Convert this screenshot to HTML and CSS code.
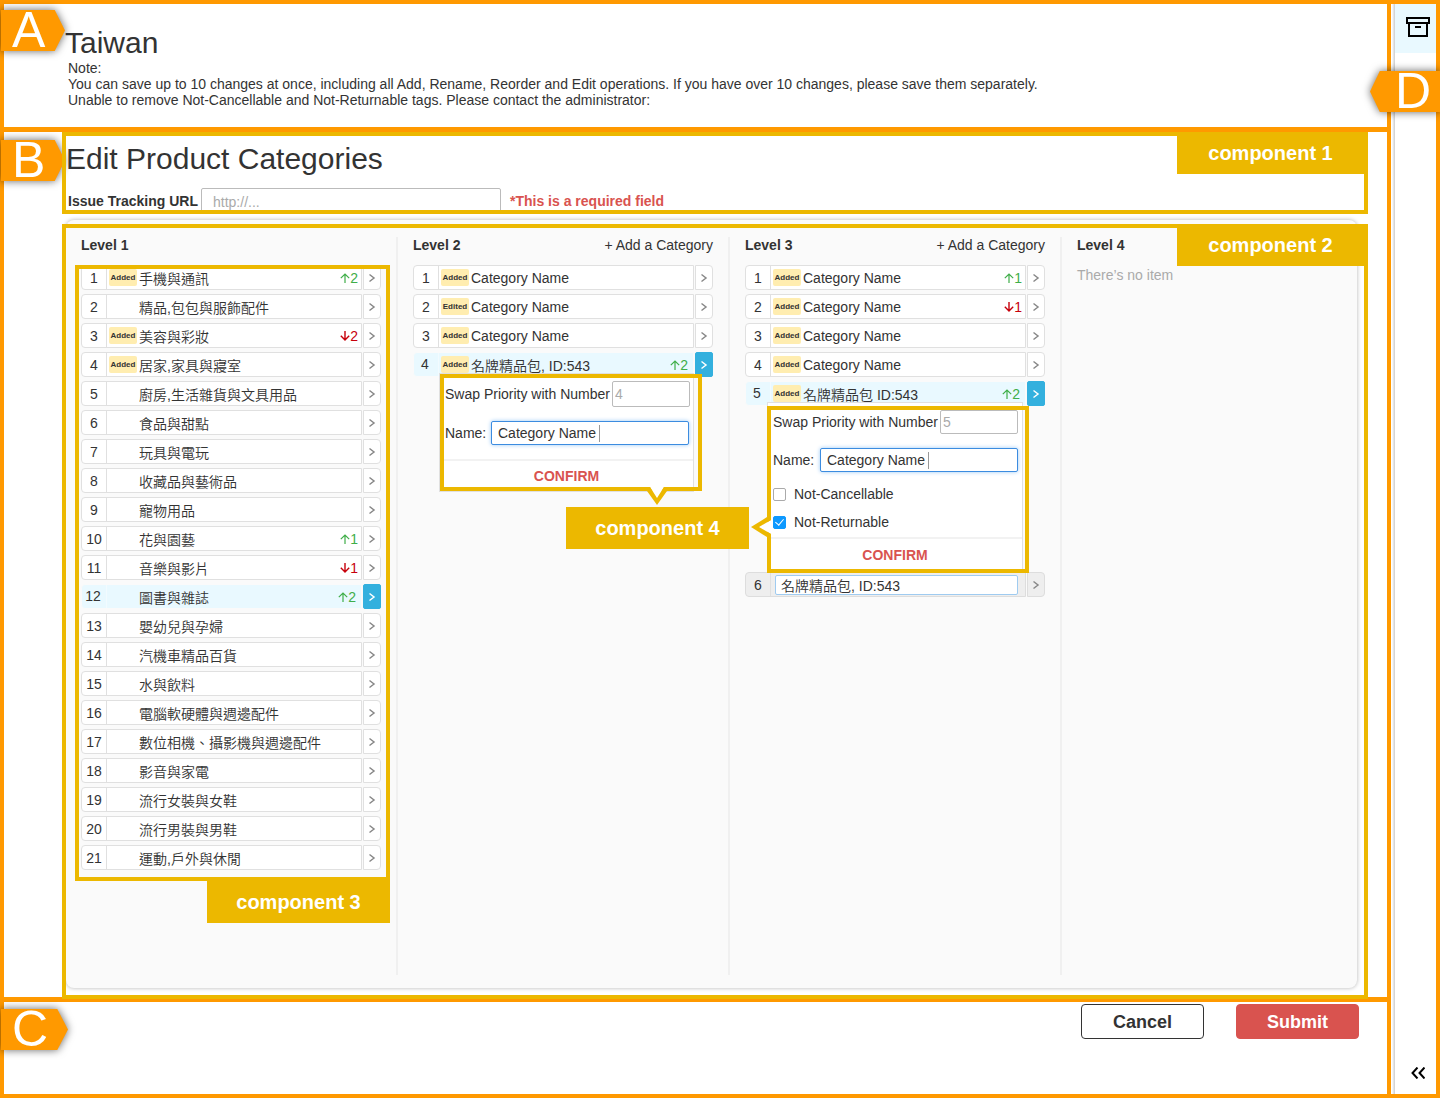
FILE: index.html
```html
<!DOCTYPE html>
<html lang="en">
<head>
<meta charset="utf-8">
<meta name="viewport" content="width=device-width, initial-scale=1">
<title>Edit Product Categories</title>
<link rel="stylesheet" href="styles.css">
</head>
<body>
<svg class="defs" aria-hidden="true">
  <symbol id="i-next" viewBox="0 0 8 10"><path d="M1.5 1.5 6 5 1.5 8.5" fill="none" stroke="currentColor" stroke-width="1.5"/></symbol>
  <symbol id="i-up" viewBox="0 0 10 10"><path d="M5 10V1.2M.8 5.2 5 1l4.200 4.200" fill="none" stroke="currentColor" stroke-width="1.200"/></symbol>
  <symbol id="i-down" viewBox="0 0 10 10"><path d="M5 0v8.800M.8 4.800 5 9l4.200-4.200" fill="none" stroke="currentColor" stroke-width="1.400"/></symbol>
</svg>
<div class="app">
  <main class="main">
    <header class="region region-a">
      <span class="letter letter-a"><b>A</b></span>
      <h1 class="title">Taiwan</h1>
      <p class="note">Note:<br>You can save up to 10 changes at once, including all Add, Rename, Reorder and Edit operations. If you have over 10 changes, please save them separately.<br>Unable to remove Not-Cancellable and Not-Returnable tags. Please contact the administrator:</p>
    </header>

    <section class="region region-b">
      <span class="letter letter-b"><b>B</b></span>
      <div class="intro">
        <h2 class="title">Edit Product Categories</h2>
        <div class="url-row">
          <label for="url">Issue Tracking URL</label>
          <input id="url" class="url" type="text" placeholder="http://...">
          <span class="error">*This is a required field</span>
        </div>
        <div class="frame frame-1"><span class="tag tag-corner">component 1</span></div>
      </div>

      <div class="board">
        <div class="card">
          <section class="level">
            <div class="level-head"><h3>Level 1</h3></div>
            <ol class="list">
              <li><div class="row"><div class="cell"><span class="num">1</span><span class="slot"><em>Added</em></span><span class="name zh">手機與通訊</span><span class="move up"><svg><use href="#i-up"/></svg>2</span></div><button class="open" aria-label="Open"><svg><use href="#i-next"/></svg></button></div></li>
              <li><div class="row"><div class="cell"><span class="num">2</span><span class="slot"></span><span class="name zh">精品,包包與服飾配件</span></div><button class="open" aria-label="Open"><svg><use href="#i-next"/></svg></button></div></li>
              <li><div class="row"><div class="cell"><span class="num">3</span><span class="slot"><em>Added</em></span><span class="name zh">美容與彩妝</span><span class="move down"><svg><use href="#i-down"/></svg>2</span></div><button class="open" aria-label="Open"><svg><use href="#i-next"/></svg></button></div></li>
              <li><div class="row"><div class="cell"><span class="num">4</span><span class="slot"><em>Added</em></span><span class="name zh">居家,家具與寢室</span></div><button class="open" aria-label="Open"><svg><use href="#i-next"/></svg></button></div></li>
              <li><div class="row"><div class="cell"><span class="num">5</span><span class="slot"></span><span class="name zh">廚房,生活雜貨與文具用品</span></div><button class="open" aria-label="Open"><svg><use href="#i-next"/></svg></button></div></li>
              <li><div class="row"><div class="cell"><span class="num">6</span><span class="slot"></span><span class="name zh">食品與甜點</span></div><button class="open" aria-label="Open"><svg><use href="#i-next"/></svg></button></div></li>
              <li><div class="row"><div class="cell"><span class="num">7</span><span class="slot"></span><span class="name zh">玩具與電玩</span></div><button class="open" aria-label="Open"><svg><use href="#i-next"/></svg></button></div></li>
              <li><div class="row"><div class="cell"><span class="num">8</span><span class="slot"></span><span class="name zh">收藏品與藝術品</span></div><button class="open" aria-label="Open"><svg><use href="#i-next"/></svg></button></div></li>
              <li><div class="row"><div class="cell"><span class="num">9</span><span class="slot"></span><span class="name zh">寵物用品</span></div><button class="open" aria-label="Open"><svg><use href="#i-next"/></svg></button></div></li>
              <li><div class="row"><div class="cell"><span class="num">10</span><span class="slot"></span><span class="name zh">花與園藝</span><span class="move up"><svg><use href="#i-up"/></svg>1</span></div><button class="open" aria-label="Open"><svg><use href="#i-next"/></svg></button></div></li>
              <li><div class="row"><div class="cell"><span class="num">11</span><span class="slot"></span><span class="name zh">音樂與影片</span><span class="move down"><svg><use href="#i-down"/></svg>1</span></div><button class="open" aria-label="Open"><svg><use href="#i-next"/></svg></button></div></li>
              <li><div class="row selected"><div class="cell"><span class="num">12</span><span class="slot"></span><span class="name zh">圖書與雜誌</span><span class="move up"><svg><use href="#i-up"/></svg>2</span></div><button class="open" aria-label="Open"><svg><use href="#i-next"/></svg></button></div></li>
              <li><div class="row"><div class="cell"><span class="num">13</span><span class="slot"></span><span class="name zh">嬰幼兒與孕婦</span></div><button class="open" aria-label="Open"><svg><use href="#i-next"/></svg></button></div></li>
              <li><div class="row"><div class="cell"><span class="num">14</span><span class="slot"></span><span class="name zh">汽機車精品百貨</span></div><button class="open" aria-label="Open"><svg><use href="#i-next"/></svg></button></div></li>
              <li><div class="row"><div class="cell"><span class="num">15</span><span class="slot"></span><span class="name zh">水與飲料</span></div><button class="open" aria-label="Open"><svg><use href="#i-next"/></svg></button></div></li>
              <li><div class="row"><div class="cell"><span class="num">16</span><span class="slot"></span><span class="name zh">電腦軟硬體與週邊配件</span></div><button class="open" aria-label="Open"><svg><use href="#i-next"/></svg></button></div></li>
              <li><div class="row"><div class="cell"><span class="num">17</span><span class="slot"></span><span class="name zh">數位相機、攝影機與週邊配件</span></div><button class="open" aria-label="Open"><svg><use href="#i-next"/></svg></button></div></li>
              <li><div class="row"><div class="cell"><span class="num">18</span><span class="slot"></span><span class="name zh">影音與家電</span></div><button class="open" aria-label="Open"><svg><use href="#i-next"/></svg></button></div></li>
              <li><div class="row"><div class="cell"><span class="num">19</span><span class="slot"></span><span class="name zh">流行女裝與女鞋</span></div><button class="open" aria-label="Open"><svg><use href="#i-next"/></svg></button></div></li>
              <li><div class="row"><div class="cell"><span class="num">20</span><span class="slot"></span><span class="name zh">流行男裝與男鞋</span></div><button class="open" aria-label="Open"><svg><use href="#i-next"/></svg></button></div></li>
              <li><div class="row"><div class="cell"><span class="num">21</span><span class="slot"></span><span class="name zh">運動,戶外與休閒</span></div><button class="open" aria-label="Open"><svg><use href="#i-next"/></svg></button></div></li>
              <li class="frame frame-3" role="presentation"><span class="tag tag-below">component 3</span></li>
            </ol>
          </section>

          <section class="level">
            <div class="level-head"><h3>Level 2</h3><button class="add">+ Add a Category</button></div>
            <ol class="list">
              <li><div class="row"><div class="cell"><span class="num">1</span><span class="slot"><em>Added</em></span><span class="name">Category Name</span></div><button class="open" aria-label="Open"><svg><use href="#i-next"/></svg></button></div></li>
              <li><div class="row"><div class="cell"><span class="num">2</span><span class="slot"><em>Edited</em></span><span class="name">Category Name</span></div><button class="open" aria-label="Open"><svg><use href="#i-next"/></svg></button></div></li>
              <li><div class="row"><div class="cell"><span class="num">3</span><span class="slot"><em>Added</em></span><span class="name">Category Name</span></div><button class="open" aria-label="Open"><svg><use href="#i-next"/></svg></button></div></li>
              <li><div class="row selected"><div class="cell"><span class="num">4</span><span class="slot"><em>Added</em></span><span class="name zh">名牌精品包, ID:543</span><span class="move up"><svg><use href="#i-up"/></svg>2</span></div><button class="open" aria-label="Open"><svg><use href="#i-next"/></svg></button></div>
                <form class="pop pop-menu">
                  <div class="field"><label for="swap-4">Swap Priority with Number</label><input id="swap-4" class="swap" type="text" placeholder="4"></div>
                  <div class="field"><label for="name-4">Name:</label><span class="focus"><input id="name-4" type="text" value="Category Name"><i class="caret"></i></span></div>
                  <button class="confirm" type="button">CONFIRM</button>
                  <div class="frame frame-4a">
                    <svg class="notch-down" viewBox="0 0 20 20"><path d="M3 0h14L10 12z" fill="#fff"/><path d="M0 4 3 0l7 11 7-11 3 4L10 18z" fill="#ecb800"/></svg>
                    <span class="tag tag-4">component 4</span>
                  </div>
                </form>
              </li>
            </ol>
          </section>

          <section class="level">
            <div class="level-head"><h3>Level 3</h3><button class="add">+ Add a Category</button></div>
            <ol class="list">
              <li><div class="row"><div class="cell"><span class="num">1</span><span class="slot"><em>Added</em></span><span class="name">Category Name</span><span class="move up"><svg><use href="#i-up"/></svg>1</span></div><button class="open" aria-label="Open"><svg><use href="#i-next"/></svg></button></div></li>
              <li><div class="row"><div class="cell"><span class="num">2</span><span class="slot"><em>Added</em></span><span class="name">Category Name</span><span class="move down"><svg><use href="#i-down"/></svg>1</span></div><button class="open" aria-label="Open"><svg><use href="#i-next"/></svg></button></div></li>
              <li><div class="row"><div class="cell"><span class="num">3</span><span class="slot"><em>Added</em></span><span class="name">Category Name</span></div><button class="open" aria-label="Open"><svg><use href="#i-next"/></svg></button></div></li>
              <li><div class="row"><div class="cell"><span class="num">4</span><span class="slot"><em>Added</em></span><span class="name">Category Name</span></div><button class="open" aria-label="Open"><svg><use href="#i-next"/></svg></button></div></li>
              <li><div class="row selected"><div class="cell"><span class="num">5</span><span class="slot"><em>Added</em></span><span class="name zh">名牌精品包 ID:543</span><span class="move up"><svg><use href="#i-up"/></svg>2</span></div><button class="open" aria-label="Open"><svg><use href="#i-next"/></svg></button></div>
                <form class="pop pop-inline">
                  <div class="field"><label for="swap-5">Swap Priority with Number</label><input id="swap-5" class="swap" type="text" placeholder="5"></div>
                  <div class="field"><label for="name-5">Name:</label><span class="focus"><input id="name-5" type="text" value="Category Name"><i class="caret"></i></span></div>
                  <div class="checks">
                    <label class="check"><input type="checkbox">Not-Cancellable</label>
                    <label class="check"><input type="checkbox" checked>Not-Returnable</label>
                  </div>
                  <button class="confirm" type="button">CONFIRM</button>
                  <div class="frame frame-4b">
                    <svg class="notch-left" viewBox="0 0 20 26"><path d="M20 6 8 13l12 7z" fill="#fff"/><path d="M16 3 0 13l16 10h4v-3L8 13l12-7V3z" fill="#ecb800"/></svg>
                  </div>
                </form>
              </li>
              <li><div class="row editing"><div class="cell"><span class="num">6</span><input class="rename" type="text" value="名牌精品包, ID:543" aria-label="Category name"></div><button class="open" aria-label="Open"><svg><use href="#i-next"/></svg></button></div></li>
            </ol>
          </section>

          <section class="level">
            <div class="level-head"><h3>Level 4</h3></div>
            <p class="empty">There’s no item</p>
          </section>
        </div>
        <div class="frame frame-2"><span class="tag tag-corner">component 2</span></div>
      </div>
    </section>

    <footer class="region-c">
      <span class="letter letter-c"><b>C</b></span>
      <button class="btn">Cancel</button>
      <button class="btn btn-primary">Submit</button>
    </footer>
  </main>

  <aside class="side">
    <button class="side-item" aria-label="Archive"><svg width="24" height="20" viewBox="0 0 24 20" fill="none" stroke="#000" stroke-width="2"><path d="M1 1h22v5H1zM3 6v13h18V6M9 10h6"/></svg></button>
    <span class="letter letter-d"><b>D</b></span>
    <button class="collapse" aria-label="Expand"><svg width="14" height="12" viewBox="0 0 14 12" fill="none" stroke="#000" stroke-width="2"><path d="M6.500 .5 1.500 6l5 5.500M13.500 .5 8.500 6l5 5.500"/></svg></button>
  </aside>
</div>
</body>
</html>
```
FILE: styles.css
```css
:root {
  --orange: #ff9900;
  --gold: #ecb800;
  --text: #333;
  --line: #e0e0e0;
  --red: #d9534f;
  --sans: "Liberation Sans", "Noto Sans CJK TC", sans-serif;
}

* { box-sizing: border-box; }

body {
  margin: 0;
  background: #fff;
  color: var(--text);
  font: 14px/16px var(--sans);
}

h1, h2, h3, p, ol { margin: 0; padding: 0; }
ol { list-style: none; }
button, input { font: inherit; color: inherit; margin: 0; }
button { padding: 0; border: 0; background: none; cursor: pointer; }

.defs { position: absolute; width: 0; height: 0; }

.app {
  display: flex;
  min-height: 100vh;
  border: 4px solid var(--orange);
}

.main {
  flex: 1;
  min-width: 0;
  display: flex;
  flex-direction: column;
  border-right: 4px solid var(--orange);
}

.region { position: relative; border-bottom: 5px solid var(--orange); }
.region-a { padding: 21px 24px 18px 61px; min-height: 128px; }

.title { font-size: 30px; line-height: 35px; font-weight: 400; }
.note { padding-left: 3px; }

/* Region letters */
.letter {
  position: absolute;
  z-index: 3;
  filter: drop-shadow(0 0 4px rgba(0, 0, 0, .6));
}
.letter b {
  display: block;
  width: 64px;
  height: 41px;
  padding-left: 11px;
  background: var(--orange);
  clip-path: polygon(0 0, 84% 0, 100% 50%, 84% 100%, 0 100%);
  color: #fff;
  font: 400 50px/41px "Liberation Sans", sans-serif;
}
.letter-a { left: -3px; top: 6px; }
.letter-b { left: -3px; top: 8px; z-index: 1; }
.letter-c { left: -3px; top: 7px; }
.letter-c b { width: 67px; }
.letter-d { right: -4px; top: 67px; }
.letter-d b {
  width: 70px;
  padding-left: 25px;
  clip-path: polygon(14% 0, 100% 0, 100% 100%, 14% 100%, 0 50%);
}

/* Component frames */
.frame {
  position: absolute;
  z-index: 2;
  border: 4px solid var(--gold);
  pointer-events: none;
}
.tag {
  position: absolute;
  width: 183px;
  height: 42px;
  background: var(--gold);
  color: #fff;
  font-size: 20px;
  line-height: 42px;
  font-weight: 700;
  text-align: center;
  white-space: nowrap;
}
.tag-corner { top: -4px; right: -4px; width: 191px; padding-right: 4px; }
.tag-below { top: 100%; right: -4px; height: 46px; line-height: 50px; }
.tag-4 { left: 122px; top: 129px; }
.frame-1 { inset: 0; }
.frame-2 { inset: 4px 0 -11px; }
.frame-3 { inset: 0 -9px -11px -6px; }
.frame-4a { inset: 0 -9px 0 0; }
.frame-4b { inset: 3px -7px -2px -1px; }
.notch-down { position: absolute; left: 203px; top: 100%; width: 20px; height: 20px; }
.notch-left { position: absolute; left: -20px; top: 104px; width: 20px; height: 26px; }

.region-b {
  flex: 1;
  display: flex;
  flex-direction: column;
  gap: 6px;
  padding: 0 19px 9px 58px;
}

.intro { position: relative; z-index: 2; padding: 9px 4px 0; }
.url-row {
  display: flex;
  align-items: center;
  margin-top: 12px;
  padding-left: 2px;
  font-weight: 700;
}
.url-row label { min-width: 133px; white-space: nowrap; }
.url {
  width: 300px;
  height: 26px;
  padding: 2px 11px 0;
  border: 1px solid #bbb;
  border-radius: 2px;
  font-weight: 400;
}
::placeholder { color: #aaa; opacity: 1; }
.error { margin-left: 9px; color: var(--red); }

/* Category board */
.board {
  position: relative;
  flex: 1;
  display: flex;
  padding: 0 11px 0 4px;
}
.card {
  flex: 1;
  display: grid;
  grid-template-columns: 332fr 332fr 332fr 295fr;
  padding: 17px 0 13px;
  background: #fafafa;
  border-radius: 8px;
  box-shadow: 0 0 4px rgba(0, 0, 0, .3);
}
.level {
  min-width: 0;
  padding: 0 15px;
  border-right: 2px solid #f0f0f0;
}
.level:last-child { border: 0; }
.level-head { display: flex; justify-content: space-between; margin-bottom: 12px; }
.level-head h3 { font-size: 14px; font-weight: 700; }
.empty { line-height: 20px; color: #aaa; }

.list { position: relative; display: flex; flex-direction: column; gap: 4px; }
.list li:not(.frame) { position: relative; }

.row { display: flex; gap: 1px; height: 25px; }
.cell {
  flex: 1;
  min-width: 0;
  display: flex;
  align-items: center;
  padding-right: 3px;
  border: 1px solid var(--line);
  border-radius: 4px 0 0 4px;
  background: #fff;
}
.num {
  width: 25px;
  height: 23px;
  padding-top: 1px;
  border-right: 1px solid var(--line);
  line-height: 23px;
  text-align: center;
}
.slot { width: 32px; padding-left: 2px; }
.slot em {
  display: block;
  width: 28px;
  border-radius: 2px;
  background: #ffedb0;
  font: 700 8px/17px "Liberation Sans", sans-serif;
  text-align: center;
}
.name { flex: 1; white-space: nowrap; }
.zh { padding-top: 2px; font-weight: 350; }
.move { display: flex; align-items: center; }
.move svg { width: 10px; height: 10px; }
.up { color: #3fae49; }
.down { color: #c7000b; }
.open {
  display: grid;
  place-items: center;
  width: 18px;
  border: 1px solid var(--line);
  border-radius: 0 4px 4px 0;
  background: #fff;
  color: #888;
}
.open svg { width: 8px; height: 10px; }

.selected .cell { border-color: #fafafa; background: #e9f9ff; padding-right: 5px; }
.selected .num { padding: 0 2px 0 0; border-color: #f2fbff; }
.selected .open { border-color: #33b0de; border-radius: 2px; background: #33b0de; color: #fff; }

.editing .cell, .editing .open { background: #eee; border-color: #ddd; }
.rename {
  flex: 1;
  min-width: 0;
  height: 20px;
  margin: 0 4px;
  padding: 1px 5px 0;
  border: 1px solid #9fcbf0;
  border-radius: 2px;
  background: #fff;
  font-weight: 350;
}

/* Edit popover */
.pop {
  z-index: 3;
  padding-top: 7px;
  border: 1px solid var(--line);
  background: #fff;
}
.pop-menu { position: absolute; left: 26px; right: 19px; top: 21px; }
.list .pop-inline { position: relative; margin: -4px 22px; }
.field {
  display: flex;
  align-items: center;
  justify-content: space-between;
  gap: 2px;
  margin-bottom: 14px;
  padding: 0 4px 0 5px;
  white-space: nowrap;
}
.swap {
  width: 78px;
  height: 24px;
  padding: 0 2px;
  border: 1px solid #bbb;
  border-radius: 2px;
}
.focus { position: relative; width: 198px; }
.focus input {
  display: block;
  width: 100%;
  height: 24px;
  padding: 0 6px;
  border: 1px solid #3c8ce0;
  border-radius: 2px;
  background: #fff;
  box-shadow: 0 0 4px #9cc9f5;
}
.caret { position: absolute; left: 108px; top: 4px; width: 1px; height: 17px; background: #999; }
.confirm {
  display: block;
  width: 100%;
  height: 32px;
  border-top: 2px solid #f2f2f2;
  color: var(--red);
  font-weight: 700;
}
.pop-menu .swap { height: 26px; }
.pop-inline .confirm { height: 34px; }
.checks { margin: -6px 0 1px; padding-left: 5px; }
.check { display: flex; align-items: center; gap: 8px; height: 28px; }
.check input {
  display: grid;
  place-items: center;
  width: 13px;
  height: 13px;
  border: 1px solid #aaa;
  border-radius: 2px;
  background: #fff;
  appearance: none;
}
.check input:checked { border-color: #0d99ff; background: #0d99ff; }
.check input:checked::after {
  content: "";
  width: 4px;
  height: 7px;
  margin-bottom: 2px;
  border: solid #fff;
  border-width: 0 1px 1px 0;
  transform: rotate(40deg);
}

/* Actions */
.region-c {
  position: relative;
  display: flex;
  justify-content: flex-end;
  gap: 32px;
  padding: 2px 28px 55px;
}
.btn {
  width: 123px;
  height: 35px;
  border: 1px solid var(--text);
  border-radius: 4px;
  background: #fff;
  font-size: 18px;
  font-weight: 700;
}
.btn-primary { border-color: var(--red); background: var(--red); color: #fff; }

/* Right rail */
.side {
  position: relative;
  width: 45px;
  display: flex;
  flex-direction: column;
  justify-content: space-between;
  padding-left: 2px;
  background: linear-gradient(to right, #fff 1px, #ccc 4px, #fff 4px);
}
.side-item, .collapse { display: grid; place-items: center; margin-left: 2px; padding-left: 5px; }
.side-item { height: 49px; padding-bottom: 3px; background: #e9f9ff; }
.collapse { height: 43px; }
```
